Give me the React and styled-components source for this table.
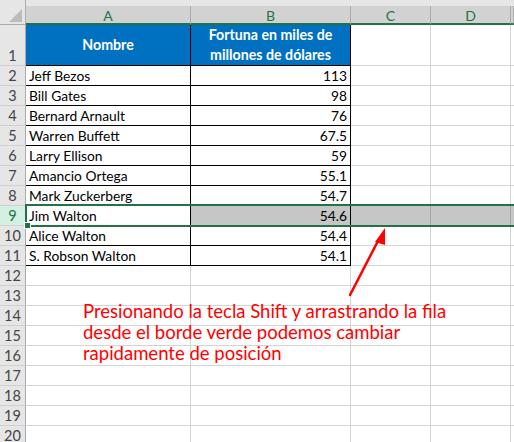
import React from "react";
import styled, { createGlobalStyle } from "styled-components";

const GlobalStyle = createGlobalStyle`
  html, body { margin: 0; padding: 0; background: #ffffff; }
  body { overflow: hidden; }
`;

const COLS = "26px 165px 160px 80px 80px 1fr";
const GREEN = "#217346";
const FONT = `Lato, "Open Sans", sans-serif`;

const Sheet = styled.div`
  position: relative;
  width: 514px;
  height: 442px;
  overflow: hidden;
  font-family: ${FONT};
  background: #ffffff;
`;

const HeaderBar = styled.div`
  display: grid;
  grid-template-columns: ${COLS};
  height: 25px;
  background: #e6e6e6;
`;

const Corner = styled.div`
  position: relative;
  box-sizing: border-box;
  height: 25px;
  border-right: 1px solid #ababab;
  border-bottom: 1px solid #ababab;
  &::after {
    content: "";
    position: absolute;
    right: 3px;
    bottom: 2px;
    width: 0;
    height: 0;
    border-left: 13px solid transparent;
    border-bottom: 13px solid #bcbcbc;
  }
`;

const ColHead = styled.div`
  align-self: end;
  box-sizing: border-box;
  height: 19px;
  background: #d2d2d2;
  border-right: 1px solid #ababab;
  border-bottom: 2px solid ${GREEN};
  color: ${GREEN};
  font-size: 14px;
  display: flex;
  align-items: center;
  justify-content: center;
  padding-top: 1px;
`;

const Body = styled.div`
  display: grid;
  grid-template-columns: ${COLS};
  grid-template-rows: 41px;
  grid-auto-rows: 20px;
`;

const RowHead = styled.div`
  box-sizing: border-box;
  background: ${(p) => (p.$selected ? "#d3f0e0" : "#e6e6e6")};
  color: ${(p) => (p.$selected ? GREEN : "#444444")};
  border-right: 1px solid #ababab;
  border-bottom: 1px solid #d0d0d0;
  font-size: 14.5px;
  display: flex;
  align-items: flex-end;
  justify-content: center;
  line-height: 18px;
`;

const Cell = styled.div`
  box-sizing: border-box;
  background: ${(p) => (p.$shade ? "#c6c6c6" : "#ffffff")};
  border-right: 1px solid ${(p) => (p.$table ? "#000000" : p.$shade ? "#a6a6a6" : "#d4d4d4")};
  border-bottom: 1px solid ${(p) => (p.$table ? "#000000" : "#d4d4d4")};
  color: #000000;
  font-size: 13.8px;
  line-height: 18px;
  padding: 0 3px;
  display: flex;
  align-items: flex-end;
  justify-content: ${(p) => (p.$right ? "flex-end" : "flex-start")};
  white-space: nowrap;
  overflow: hidden;
`;

const TitleCell = styled.div`
  box-sizing: border-box;
  background: #0070c0;
  color: #ffffff;
  font-weight: 700;
  font-size: 14.2px;
  line-height: 20px;
  border-right: 1px solid #000000;
  border-bottom: 1px solid #000000;
  display: flex;
  align-items: center;
  justify-content: center;
  text-align: center;
`;

const Selection = styled.div`
  position: absolute;
  left: 25px;
  top: 204px;
  width: 495px;
  height: 23px;
  box-sizing: border-box;
  border: 2px solid ${GREEN};
  pointer-events: none;
`;

const Handle = styled.div`
  position: absolute;
  left: 24px;
  top: 222px;
  width: 5px;
  height: 5px;
  background: ${GREEN};
  border: 1px solid #ffffff;
`;

const Note = styled.div`
  position: absolute;
  left: 83px;
  top: 301px;
  width: 430px;
  color: #ff0000;
  font-family: ${FONT};
  font-size: 18.5px;
  line-height: 21px;
  white-space: nowrap;
`;

const ArrowSvg = styled.svg`
  position: absolute;
  left: 0;
  top: 0;
  pointer-events: none;
`;

const people = [
  ["Jeff Bezos", "113"],
  ["Bill Gates", "98"],
  ["Bernard Arnault", "76"],
  ["Warren Buffett", "67.5"],
  ["Larry Ellison", "59"],
  ["Amancio Ortega", "55.1"],
  ["Mark Zuckerberg", "54.7"],
  ["Jim Walton", "54.6"],
  ["Alice Walton", "54.4"],
  ["S. Robson Walton", "54.1"],
];

const SELECTED_ROW = 9;

export default function App() {
  const emptyRows = [];
  for (let r = 12; r <= 20; r++) emptyRows.push(r);

  return (
    <>
      <GlobalStyle />
      <Sheet>
        <HeaderBar>
          <Corner />
          <ColHead>A</ColHead>
          <ColHead>B</ColHead>
          <ColHead>C</ColHead>
          <ColHead>D</ColHead>
          <ColHead />
        </HeaderBar>
        <Body>
          <RowHead>1</RowHead>
          <TitleCell>Nombre</TitleCell>
          <TitleCell>
            Fortuna en miles de
            <br />
            millones de dólares
          </TitleCell>
          <Cell />
          <Cell />
          <Cell />
          {people.map(([name, value], i) => {
            const r = i + 2;
            const sel = r === SELECTED_ROW;
            return (
              <React.Fragment key={r}>
                <RowHead $selected={sel}>{r}</RowHead>
                <Cell $table>{name}</Cell>
                <Cell $table $right $shade={sel}>
                  {value}
                </Cell>
                <Cell $shade={sel} />
                <Cell $shade={sel} />
                <Cell $shade={sel} />
              </React.Fragment>
            );
          })}
          {emptyRows.map((r) => (
            <React.Fragment key={r}>
              <RowHead>{r}</RowHead>
              <Cell />
              <Cell />
              <Cell />
              <Cell />
              <Cell />
            </React.Fragment>
          ))}
        </Body>
        <Selection />
        <Handle />
        <ArrowSvg width="514" height="442" viewBox="0 0 514 442">
          <line x1="350" y1="295" x2="379" y2="239" stroke="#ff0000" strokeWidth="2.5" strokeLinecap="round" />
          <polygon points="385,228 375,242 385,245" fill="#ff0000" />
        </ArrowSvg>
        <Note>
          Presionando la tecla Shift y arrastrando la fila
          <br />
          desde el borde verde podemos cambiar
          <br />
          rapidamente de posición
        </Note>
      </Sheet>
    </>
  );
}
